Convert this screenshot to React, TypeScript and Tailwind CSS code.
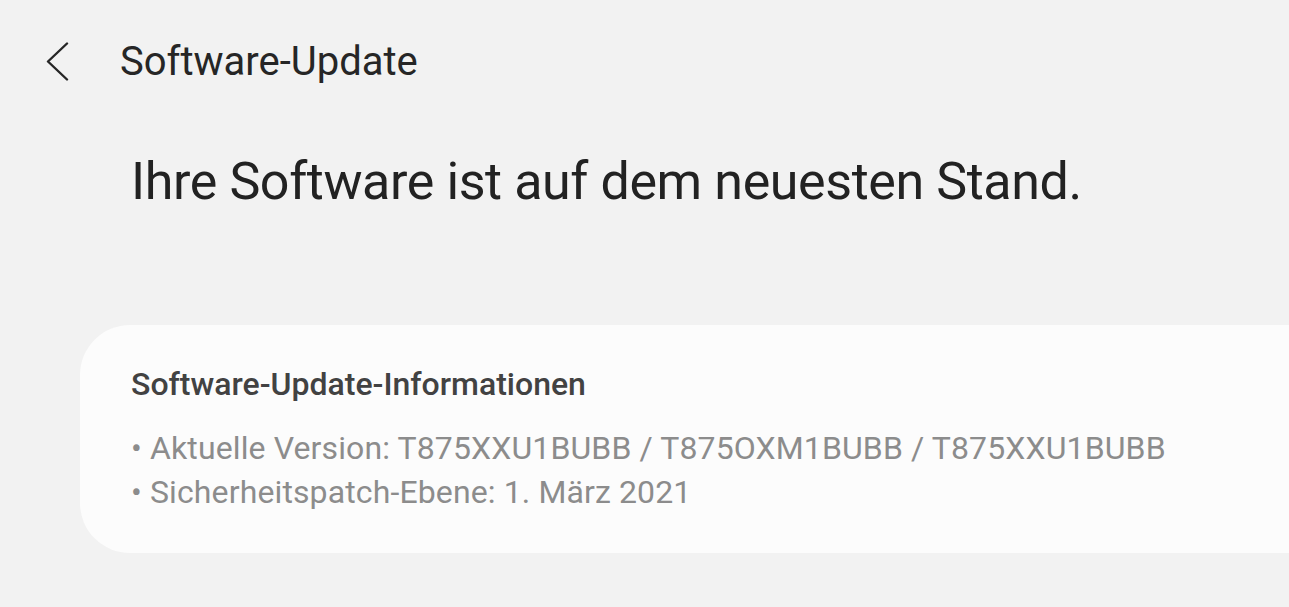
import React from "react";

export default function App() {
  return (
    <div
      className="w-[1289px] h-[607px] overflow-hidden bg-[#f2f2f2] text-[#222222] flow-root"
      style={{ fontFamily: "Roboto, 'Noto Sans', sans-serif" }}
    >
      <div className="flex items-center h-[40px] mt-[42px] pl-[45px]">
        <svg width="24" height="40" viewBox="0 0 24 40" className="shrink-0">
          <path d="M22 1.5 L3 19.5 L22 37.5" fill="none" stroke="#262626" strokeWidth="2.4" strokeLinecap="round" strokeLinejoin="round" />
        </svg>
        <div className="ml-[51px] text-[40px] leading-none text-[#262626]">Software-Update</div>
      </div>
      <div className="pl-[131px] mt-[74px] text-[52px] leading-none tracking-[-0.4px] text-[#222222] whitespace-nowrap">
        Ihre Software ist auf dem neuesten Stand.
      </div>
      <div className="ml-[80px] mt-[117px] h-[228px] rounded-l-[50px] bg-[#fcfcfc] pl-[51px] pt-[43px]">
        <div className="text-[32px] font-medium leading-none text-[#424242] whitespace-nowrap">Software-Update-Informationen</div>
        <div className="mt-[26px] text-[32px] leading-[44px] tracking-[0.12px] text-[#8c8c8c] whitespace-nowrap">
          <div>• Aktuelle Version: T875XXU1BUBB / T875OXM1BUBB / T875XXU1BUBB</div>
          <div>• Sicherheitspatch-Ebene: 1. März 2021</div>
        </div>
      </div>
    </div>
  );
}
